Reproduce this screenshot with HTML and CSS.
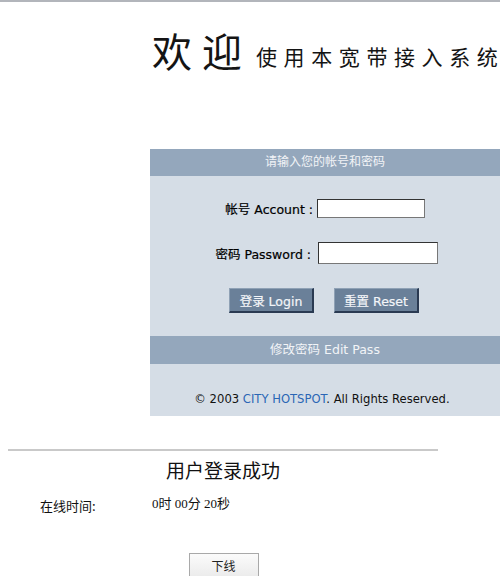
FILE: index.html
```html
<!DOCTYPE html>
<html lang="zh-CN">
<head>
<meta charset="utf-8">
<title>欢迎使用本宽带接入系统</title>
<link rel="stylesheet" href="styles.css">
</head>
<body>
<div class="topline"></div>
<div class="welcome">
  <span class="big">欢迎</span><span class="sub">使用本宽带接入系<span class="last">统</span></span>
</div>
<div class="panel">
  <div class="bar">请输入您的帐号和密码</div>
  <div class="form">
    <label class="lbl">帐号 Account :</label>
    <input class="inp inp-acc" type="text">
    <label class="lbl lbl-pw">密码 Password :</label>
    <input class="inp inp-pw" type="password">
  </div>
  <div class="buttons">
    <button class="btn">登录 Login</button>
    <button class="btn">重置 Reset</button>
  </div>
  <div class="bar bar-edit">修改密码 Edit Pass</div>
  <div class="copy">© 2003 <span class="brand">CITY HOTSPOT</span>. All Rights Reserved.</div>
</div>
<div class="result">
  <div class="rule"></div>
  <div class="title">用户登录成功</div>
  <div class="online">
    <span class="olabel">在线时间:</span>
    <span class="ovalue">0时 00分 20秒</span>
  </div>
  <div class="offline-row"><button class="offline">下线</button></div>
</div>
</body>
</html>
```
FILE: styles.css
```css
html, body {
  margin: 0;
  padding: 0;
  background: #ffffff;
  overflow: hidden;
}
body {
  width: 500px;
  font-family: "DejaVu Sans", "Noto Sans CJK SC", sans-serif;
  color: #111;
}
.topline {
  height: 2px;
  background: #b2b5bb;
}
.welcome {
  display: flex;
  align-items: baseline;
  padding-left: 152px;
  margin-top: 24px;
  height: 48px;
  white-space: nowrap;
  font-family: "Noto Sans CJK SC", sans-serif;
  color: #141414;
}
.big {
  font-size: 40px;
  line-height: 48px;
  letter-spacing: 10px;
}
.sub {
  font-size: 21px;
  margin-left: 4px;
  letter-spacing: 6.6px;
  position: relative;
  top: -2px;
}
.last {
  letter-spacing: 0;
}
.panel {
  margin-top: 75px;
  margin-left: 150px;
  width: 350px;
  background: #d5dde6;
  padding-bottom: 7px;
}
.bar {
  height: 27px;
  line-height: 27px;
  background: #94a7bc;
  color: #f2f4f7;
  text-align: center;
  font-size: 12px;
}
.bar-edit {
  font-size: 12.5px;
  height: 28px;
  line-height: 28px;
  margin-top: 1px;
}
.form {
  display: grid;
  grid-template-columns: 163px auto;
  column-gap: 4px;
  row-gap: 24px;
  align-items: center;
  justify-items: start;
  padding-top: 23px;
}
.lbl {
  justify-self: end;
  font-size: 12.5px;
  color: #000;
  -webkit-text-stroke: 0.2px #000;
}
.lbl-pw {
  margin-right: 2px;
}
.inp {
  box-sizing: border-box;
  border: 1px solid #333;
  border-right-color: #777;
  border-bottom-color: #777;
  background: #fff;
  padding: 0;
  margin: 0;
}
.inp-acc {
  width: 108px;
  height: 19px;
}
.inp-pw {
  width: 120px;
  height: 22px;
  margin-left: 1px;
}
.buttons {
  display: flex;
  justify-content: center;
  gap: 20px;
  padding-top: 24px;
  padding-right: 2px;
  height: 47px;
}
.btn {
  box-sizing: border-box;
  width: 85px;
  height: 25px;
  background: #6a8099;
  color: #f3f5f8;
  font-family: "DejaVu Sans", "Noto Sans CJK SC", sans-serif;
  font-size: 12.5px;
  -webkit-text-stroke: 0.2px #f3f5f8;
  border: 1px solid #8fa1b5;
  border-right: 2px solid #2a3a52;
  border-bottom: 2px solid #2a3a52;
  padding: 0;
  margin: 0;
}
.copy {
  text-align: center;
  font-size: 11.6px;
  color: #111;
  padding-top: 28px;
  height: 17px;
  padding-right: 6px;
}
.brand {
  color: #2a66b5;
}
.result {
  width: 430px;
  margin-left: 8px;
  padding-top: 33px;
}
.rule {
  height: 2px;
  background: #c9c9c9;
}
.title {
  text-align: center;
  font-family: "Noto Sans CJK SC", sans-serif;
  font-size: 19px;
  line-height: 28px;
  margin-top: 5px;
  color: #111;
}
.online {
  display: flex;
  align-items: center;
  margin-top: 6px;
  height: 26px;
}
.olabel {
  width: 112px;
  padding-left: 32px;
  box-sizing: border-box;
  font-family: "Noto Sans CJK SC", sans-serif;
  font-size: 13px;
  margin-top: 4px;
}
.ovalue {
  font-family: "Liberation Serif", "Noto Sans CJK SC", serif;
  font-size: 13px;
  margin-left: 32px;
  margin-top: -2px;
}
.offline-row {
  display: flex;
  justify-content: center;
  padding-top: 37px;
  padding-left: 1px;
}
.offline {
  box-sizing: border-box;
  width: 70px;
  height: 24px;
  background: linear-gradient(#fbfbfb, #ececec);
  border: 1px solid #a9a9a9;
  font-family: "Noto Sans CJK SC", sans-serif;
  font-size: 12px;
  color: #222;
  padding: 0;
}
```
